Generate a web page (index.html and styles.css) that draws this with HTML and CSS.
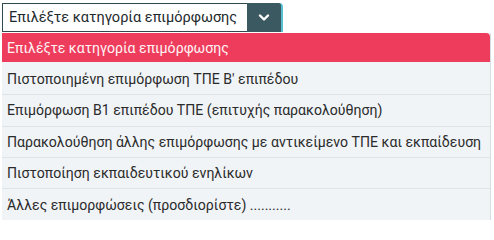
FILE: index.html
```html
<!DOCTYPE html>
<html lang="el">
<head>
<meta charset="utf-8">
<link rel="stylesheet" href="styles.css">
</head>
<body>
<div class="wrap">
  <div class="select">
    <div class="value">Επιλέξτε κατηγορία επιμόρφωσης</div>
    <div class="btn"><svg width="12" height="8" viewBox="0 0 12 8"><path d="M2 1.5 L6 5.5 L10 1.5" fill="none" stroke="#fff" stroke-width="2.4" stroke-linecap="round" stroke-linejoin="round"/></svg></div>
  </div>
  <ul class="menu">
    <li class="opt active">Επιλέξτε κατηγορία επιμόρφωσης</li>
    <li class="opt">Πιστοποιημένη επιμόρφωση ΤΠΕ Β' επιπέδου</li>
    <li class="opt">Επιμόρφωση Β1 επιπέδου ΤΠΕ (επιτυχής παρακολούθηση)</li>
    <li class="opt">Παρακολούθηση άλλης επιμόρφωσης με αντικείμενο ΤΠΕ και εκπαίδευση</li>
    <li class="opt">Πιστοποίηση εκπαιδευτικού ενηλίκων</li>
    <li class="opt">Άλλες επιμορφώσεις (προσδιορίστε) ...........</li>
  </ul>
</div>
</body>
</html>
```
FILE: styles.css
```css
html, body {
  margin: 0;
  padding: 0;
  background: #ffffff;
}
body {
  font-family: Roboto, "Noto Sans", sans-serif;
  font-size: 14.1px;
  color: #2b2b2b;
}
.wrap {
  padding: 3px 0 0 2px;
  width: 489px;
}
.select {
  display: flex;
  width: 281px;
  height: 29px;
  box-sizing: border-box;
}
.value {
  flex: 1;
  border: 1px solid #2e4a50;
  border-right: none;
  background: #fff;
  display: flex;
  align-items: center;
  padding-left: 6px;
  color: #1e2a2d;
  font-size: 14.5px;
}
.btn {
  width: 34px;
  background: #3a5960;
  border-right: 2px solid #58bfd3;
  border-radius: 0 4px 0 0;
  display: flex;
  align-items: center;
  justify-content: center;
}
.menu {
  list-style: none;
  margin: 1px 0 0;
  padding: 0;
  background: #f0f4f7;
  border-right: 1px solid #d8dde2;
}
.opt {
  height: 31.25px;
  box-sizing: border-box;
  display: flex;
  align-items: center;
  padding-left: 5px;
  border-bottom: 1px solid #dfe4e8;
  white-space: nowrap;
}
.opt.active {
  background: #ee3d5c;
  color: #fff3f5;
  height: 29px;
  margin-bottom: 2px;
  border-radius: 0 4px 0 0;
  border-bottom: none;
}
.opt:last-child {
  border-bottom: none;
}
```
